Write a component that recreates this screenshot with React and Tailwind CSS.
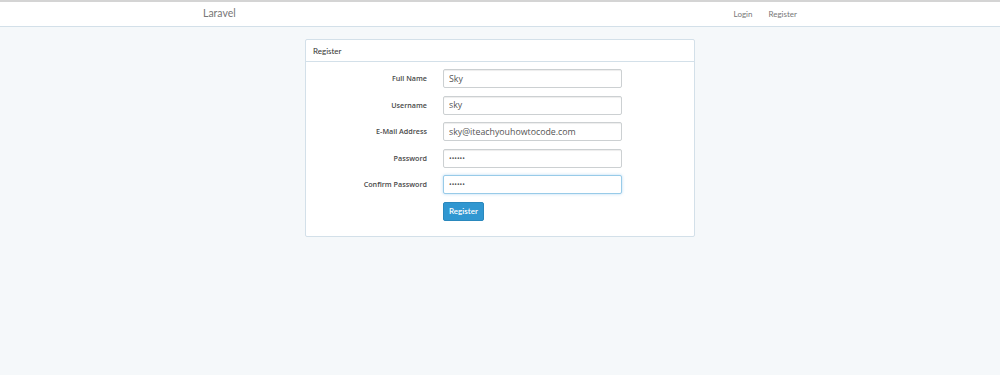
import { useState } from "react";

const fields = [
  { label: "Full Name", type: "text", value: "Sky" },
  { label: "Username", type: "text", value: "sky" },
  { label: "E-Mail Address", type: "email", value: "sky@iteachyouhowtocode.com" },
  { label: "Password", type: "password", value: "secret" },
  { label: "Confirm Password", type: "password", value: "secret", focused: true },
];

const App = () => {
  const [values, setValues] = useState(fields.map((f) => f.value));

  return (
    <div className="min-h-[375px] bg-[#f5f8fa] font-['Lato','Liberation_Sans',sans-serif] text-[#636b6f]">
      {/* Navbar */}
      <nav className="border-t-2 border-t-[#d4d4d4] border-b border-b-[#d3e0e9] bg-white">
        <div className="mx-auto flex h-[24px] w-[594px] items-center justify-between">
          <a className="text-[10.5px] text-[#777]">Laravel</a>
          <div className="flex gap-[16px] text-[8px] text-[#777]">
            <a>Login</a>
            <a>Register</a>
          </div>
        </div>
      </nav>

      {/* Panel */}
      <div className="mx-auto mt-[12px] w-[390px] rounded-[2px] border border-[#d3e0e9] bg-white">
        <div className="flex h-[22px] items-center border-b border-[#d3e0e9] px-[7px] text-[8px] text-[#333]">
          Register
        </div>
        <form className="flex flex-col gap-[7.6px] pt-[7px] pb-[15px]" onSubmit={(e) => e.preventDefault()}>
          {fields.map((field, i) => (
            <div key={field.label} className="flex items-center">
              <label className="w-[121px] text-right font-['Open_Sans','Liberation_Sans',sans-serif] text-[7.2px] font-semibold text-[#4a4a4a]">
                {field.label}
              </label>
              <input
                type={field.type}
                value={values[i]}
                onChange={(e) => {
                  const next = [...values];
                  next[i] = e.target.value;
                  setValues(next);
                }}
                className={`ml-[16px] h-[19px] w-[179px] rounded-[2px] border bg-white px-[5px] font-['Open_Sans','Liberation_Sans',sans-serif] text-[#555] outline-none ${
                  field.type === "password" ? "text-[7px]" : "text-[8.8px]"
                } ${
                  field.focused
                    ? "border-[#98cbe8] shadow-[0_0_3px_rgba(102,175,233,0.5)]"
                    : "border-[#ccd0d2] shadow-[inset_0_1px_1px_rgba(0,0,0,0.075)]"
                }`}
              />
            </div>
          ))}
          <div className="flex">
            <button
              type="submit"
              className="ml-[137px] h-[19px] rounded-[2px] border border-[#2a88bd] bg-[#3097d1] px-[5px] text-[8px] font-semibold text-white"
            >
              Register
            </button>
          </div>
        </form>
      </div>
    </div>
  );
};

export default App;
